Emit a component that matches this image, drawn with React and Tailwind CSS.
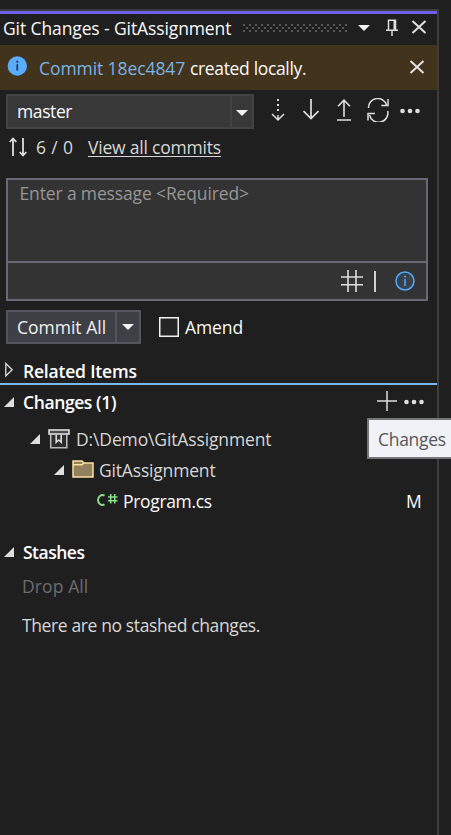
import React from "react";

const Svg = ({ w, h, className = "", children }) => (
  <svg width={w} height={h} viewBox={`0 0 ${w} ${h}`} fill="none" className={"shrink-0 " + className}>
    {children}
  </svg>
);

const CloseIcon = () => (
  <Svg w={16} h={16}>
    <path d="M1.5 2 14.5 14M14.5 2 1.5 14" stroke="#e2e2e2" strokeWidth="2" />
  </Svg>
);

const Caret = ({ className = "" }) => (
  <Svg w={12} h={6} className={className}>
    <path d="M0 0H12L6 6Z" fill="#f1f1f1" />
  </Svg>
);

const Dots = () => (
  <Svg w={20} h={6}>
    <circle cx="2.5" cy="3" r="2.3" fill="#dedede" />
    <circle cx="10" cy="3" r="2.3" fill="#dedede" />
    <circle cx="17.5" cy="3" r="2.3" fill="#dedede" />
  </Svg>
);

const Expanded = () => (
  <Svg w={10} h={10}>
    <path d="M10 0V10H0Z" fill="#dedede" />
  </Svg>
);

const Grip = () => (
  <Svg w={104} h={8}>
    <defs>
      <pattern id="grip" width="6" height="6" patternUnits="userSpaceOnUse">
        <rect x="0" y="0" width="2" height="2" fill="#585858" />
        <rect x="3" y="3" width="2" height="2" fill="#585858" />
      </pattern>
    </defs>
    <rect width="104" height="8" fill="url(#grip)" />
  </Svg>
);

function TitleBar() {
  return (
    <div className="flex h-[31px] items-center pb-[3px] pl-[3px]">
      <span className="w-[240px] tracking-[-0.11px] text-[#fafafa]">Git Changes - GitAssignment</span>
      <Grip />
      <Caret className="ml-[11px]" />
      <Svg w={12} h={18} className="ml-[16px]">
        <path d="M2.5 11V1.2H9.5V11M0 11.2H12M6 11.5V17" stroke="#dedede" strokeWidth="1.5" />
        <path d="M8.5 1V11" stroke="#dedede" strokeWidth="2" />
      </Svg>
      <span className="ml-[13px] pb-[2px]"><CloseIcon /></span>
    </div>
  );
}

function Banner() {
  return (
    <div className="flex h-[45px] items-center bg-[#42331c] pl-[7px]">
      <Svg w={20} h={20} className="mb-[3px]">
        <circle cx="10.3" cy="10" r="9.7" fill="#5aacff" />
        <path d="M10.3 8.3V14.5" stroke="#1f1f1f" strokeWidth="1.5" />
        <circle cx="10.3" cy="5.7" r="1" fill="#1f1f1f" />
      </Svg>
      <span className="ml-[12px] w-[151px] pt-[1px] tracking-[-0.08px] text-[#7ab3e8]">Commit 18ec4847</span>
      <span className="w-[219px] pt-[1px] tracking-[-0.34px] text-[#fafafa]">created locally.</span>
      <span className="pb-[1px]"><CloseIcon /></span>
    </div>
  );
}

function BranchRow() {
  return (
    <div className="mt-[4px] flex h-[35px]">
      <div className="ml-[6px] flex w-[248px] border-2 border-[#434343] bg-[#383838]">
        <span className="flex-1 pl-[9px] pt-[3px] tracking-[-0.4px] text-[#fafafa]">master</span>
        <span className="flex w-[22px] items-center justify-center border-l-2 border-[#434343]">
          <Caret className="mt-[2px]" />
        </span>
      </div>
      <div className="ml-[17px] flex pt-[4px]">
        <Svg w={14} h={24}>
          <path d="M7 1V16" stroke="#dedede" strokeWidth="2" strokeDasharray="2 3" />
          <path d="M7 17V22M1 16 7 22 13 16" stroke="#dedede" strokeWidth="1.5" />
        </Svg>
        <Svg w={16} h={24} className="ml-[18px]">
          <path d="M8 1V20.5M.5 13 8 20.5 15.5 13" stroke="#dedede" strokeWidth="1.7" />
        </Svg>
        <Svg w={14} h={24} className="ml-[18px]">
          <path d="M7 19V2M1 8.3 7 2.2 13 8.3M0 22H14" stroke="#dedede" strokeWidth="1.6" />
        </Svg>
        <Svg w={24} h={24} className="ml-[15px]">
          <path d="M2.5 10A9.2 9.2 0 0 1 20.5 7M22 1V7.5H15.3M21.7 13A9.2 9.2 0 0 1 3.5 17M2 22.5V15.5H9" stroke="#dedede" strokeWidth="1.5" />
        </Svg>
        <span className="ml-[10px] mt-[10px]"><Dots /></span>
      </div>
    </div>
  );
}

function CommitsRow() {
  return (
    <div className="flex h-[49px] pl-[9px] pt-[6px]">
      <Svg w={18} h={22} className="mt-[1px]">
        <path d="M4 20V2.5M.7 6 4 2.5 7.3 6M14 2V19.5M10.7 16 14 19.5 17.3 16" stroke="#dedede" strokeWidth="1.8" />
      </Svg>
      <span className="ml-[9px] w-[52px] tracking-[0.4px] text-[#d6d6d6]">6 / 0</span>
      <span className="h-[22px] border-b border-[#d6d6d6] tracking-[-0.2px] text-[#d6d6d6]">View all commits</span>
    </div>
  );
}

function MessageBox() {
  return (
    <div className="ml-[6px] h-[123px] w-[422px] border-2 border-[#6b6875] bg-[#333333]">
      <div className="h-[83px] border-b-2 border-[#6b6875] pl-[11.5px] pt-[1px] tracking-[-0.14px] text-[#969696]">
        Enter a message &lt;Required&gt;
      </div>
      <div className="flex h-[36px] items-center justify-end pr-[11px]">
        <Svg w={22} h={22}>
          <path d="M7 0V22M15 0V22M0 7H22M0 14.7H22" stroke="#dedede" strokeWidth="1.6" />
        </Svg>
        <span className="ml-[11px] h-[21px] w-[2px] bg-[#d0d0d0]" />
        <Svg w={20} h={20} className="ml-[19px]">
          <circle cx="10" cy="10" r="9" fill="#37424d" stroke="#55aaff" strokeWidth="1.5" />
          <path d="M10 8V15" stroke="#55aaff" strokeWidth="1.5" />
          <circle cx="10" cy="5.6" r="1" fill="#55aaff" />
        </Svg>
      </div>
    </div>
  );
}

function CommitBar() {
  return (
    <div className="mt-[9px] flex h-[34px] items-center pl-[6px]">
      <div className="flex h-[34px] w-[135px] border-2 border-[#555560] bg-[#3f3f46]">
        <span className="w-[107px] pl-[9px] pt-[3px] text-[#f1f1f1]">Commit All</span>
        <span className="flex flex-1 items-center justify-center border-l-2 border-[#555560]">
          <Caret />
        </span>
      </div>
      <Svg w={20} h={20} className="ml-[18px]">
        <rect x=".75" y=".75" width="18.5" height="18.5" fill="#252526" stroke="#f1f1f1" strokeWidth="1.5" />
      </Svg>
      <span className="ml-[6px] tracking-[-0.1px] text-[#fafafa]">Amend</span>
    </div>
  );
}

function Changes() {
  return (
    <>
      <div className="flex h-[33px] items-center pl-[4px]">
        <Expanded />
        <span className="ml-[9px] w-[354px] font-semibold tracking-[-0.4px] text-white">Changes (1)</span>
        <Svg w={20} h={20} className="mb-[1px]">
          <path d="M10 0V20M0 10H20" stroke="#dedede" strokeWidth="1.5" />
        </Svg>
        <span className="ml-[7px] pt-[1px]"><Dots /></span>
      </div>
      <div className="mt-[5px] flex h-[31px] items-center pl-[30px]">
        <Expanded />
        <Svg w={22} h={22} className="ml-[8px]">
          <path d="M2.7 6V19.7H18.8V6" fill="#2d2d2d" stroke="#b8b8b8" strokeWidth="1.6" />
          <rect x="1" y="2" width="20" height="4" fill="#4a4a4a" stroke="#dedede" strokeWidth="1.6" />
          <path d="M8.2 7V14.3L10.7 12 13.2 14.3V7" stroke="#dedede" strokeWidth="1.6" />
        </Svg>
        <span className="ml-[6px] tracking-[-0.13px] text-[#d6d6d6]">D:\Demo\GitAssignment</span>
      </div>
      <div className="flex h-[31px] items-center pl-[54px]">
        <Expanded />
        <Svg w={22} h={20} className="mb-[1px] ml-[8px]">
          <path d="M1 18V2H10L12 4H21V18Z" fill="#91815c" stroke="#ffe0a0" strokeWidth="1.5" />
          <path d="M1 5.8H10L12 4" stroke="#ffe0a0" strokeWidth="1.5" />
        </Svg>
        <span className="ml-[5px] tracking-[-0.18px] text-[#d6d6d6]">GitAssignment</span>
      </div>
      <div className="flex h-[31px] items-center pl-[96px]">
        <Svg w={22} h={14} className="mb-px">
          <path d="M8.5 2.6A4.4 5 0 1 0 8.5 11.4" stroke="#89e089" strokeWidth="2" />
          <path d="M14.7 1V10.5M18.7 1V10.5M12 4H21.5M12 7.8H21.5" stroke="#89e089" strokeWidth="1.5" />
        </Svg>
        <span className="ml-[5px] w-[283px] tracking-[-0.33px] text-[#fafafa]">Program.cs</span>
        <span className="text-[#fafafa]">M</span>
      </div>
    </>
  );
}

export default function App() {
  return (
    <div className="relative h-[835px] w-[451px] overflow-hidden whitespace-nowrap bg-[#1f1f1f] pt-[9px] font-['Open_Sans','Noto_Sans',sans-serif] text-[17.5px] leading-[24px]">
      <div className="h-[826px] w-[439px] border-r-2 border-t-2 border-[#3d3d3d]">
        <div className="h-[3px] bg-[#7160e8]" />
        <TitleBar />
        <Banner />
        <BranchRow />
        <CommitsRow />
        <MessageBox />
        <CommitBar />
        <div className="mt-[15px] flex h-[24px] items-center pl-[5px]">
          <Svg w={10} h={16} className="mb-[3px]">
            <path d="M.8 1.5V14L7.2 7.8Z" stroke="#dedede" strokeWidth="1.3" />
          </Svg>
          <span className="ml-[8px] font-semibold tracking-[-0.2px] text-white">Related Items</span>
        </div>
        <div className="h-[2px] bg-[#7bb9ec]" />
        <Changes />
        <div className="mt-[21px] flex h-[29px] items-center pl-[4px]">
          <Expanded />
          <span className="ml-[9px] font-semibold tracking-[-0.5px] text-white">Stashes</span>
        </div>
        <div className="mt-[8px] pl-[22px] tracking-[0.1px] text-[#6d6d6d]">Drop All</div>
        <div className="mt-[15px] pl-[22px] tracking-[-0.38px] text-[#d6d6d6]">There are no stashed changes.</div>
      </div>
      <div className="absolute left-[367px] top-[418px] h-[41px] w-[90px] border-2 border-[#767676] bg-[#f1f2f8] pl-[9px] pt-[7px] tracking-[-0.3px] text-[#575757]">
        Changes
      </div>
    </div>
  );
}
